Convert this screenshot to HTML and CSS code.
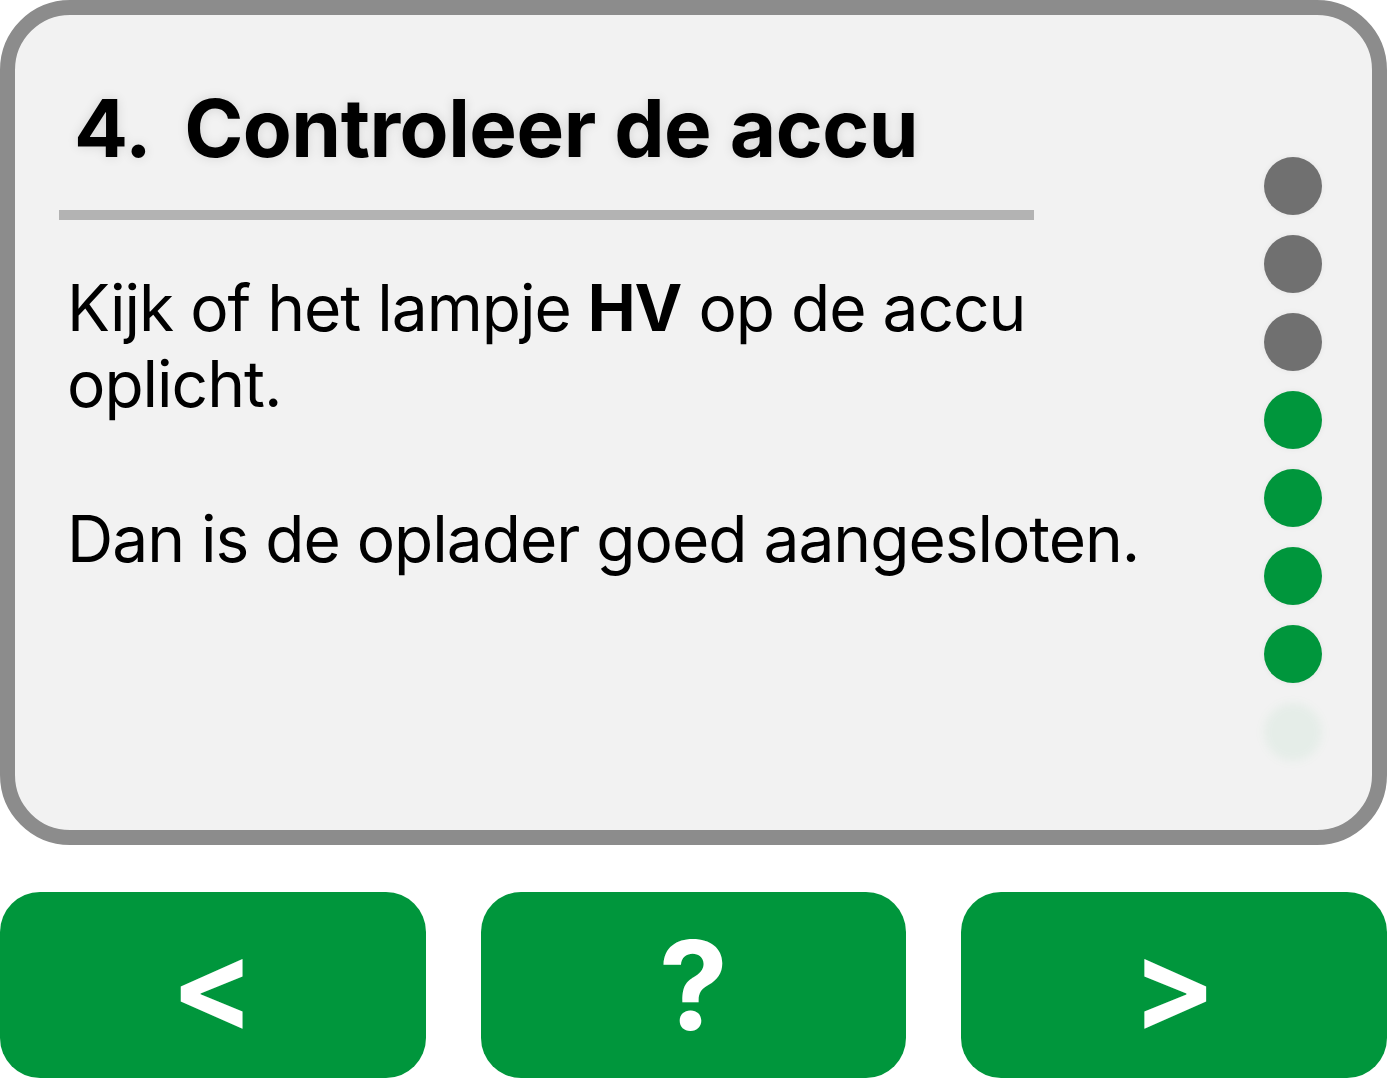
FILE: index.html
```html
<!DOCTYPE html>
<html lang="nl">
<head>
<meta charset="utf-8">
<title>Controleer de accu</title>
<link rel="stylesheet" href="styles.css">
</head>
<body>
<div class="page">
  <section class="card">
    <div class="main">
      <h1 class="title"><span class="num">4.</span>Controleer de accu</h1>
      <div class="divider"></div>
      <div class="body">
        <p>Kijk of het lampje <b>HV</b> op de accu oplicht.</p>
        <p>Dan is de oplader goed aangesloten.</p>
      </div>
    </div>
    <div class="dots">
      <span class="dot done"></span>
      <span class="dot done"></span>
      <span class="dot done"></span>
      <span class="dot todo"></span>
      <span class="dot todo"></span>
      <span class="dot todo"></span>
      <span class="dot todo"></span>
      <span class="dot ghost"></span>
    </div>
  </section>
  <nav class="buttons">
    <button class="btn">&lt;</button>
    <button class="btn">?</button>
    <button class="btn">&gt;</button>
  </nav>
</div>
</body>
</html>
```

FILE: styles.css
```css
* { box-sizing: border-box; }
html, body { margin: 0; padding: 0; background: #ffffff; }
body { font-family: Inter, "Noto Sans", "Liberation Sans", sans-serif; color: #000; }

.page {
  width: 1387px;
  height: 1078px;
  display: flex;
  flex-direction: column;
}

.card {
  height: 845px;
  border: 15px solid #8c8c8c;
  border-radius: 70px;
  background: #f2f2f2;
  display: flex;
  flex-direction: row;
  overflow: hidden;
}

.main {
  flex: 1;
  padding-left: 44px;
}

.title {
  margin: 64px 0 0 15px;
  font-size: 80px;
  font-weight: 700;
  line-height: 97px;
  letter-spacing: -0.5px;
  text-shadow: 0 0 12px rgba(0, 0, 0, 0.12);
}
.num { margin-right: 33px; }

.divider {
  width: 975px;
  height: 10px;
  background: #b3b3b3;
  margin-top: 34px;
}

.body {
  padding-left: 8px;
  margin-top: 50px;
  font-size: 64px;
  line-height: 76px;
  letter-spacing: -1px;
  width: 1110px;
}
.body p { margin: 0 0 79px 0; }
.body b { font-weight: 700; }

.dots {
  width: 137px;
  padding-top: 142px;
  padding-left: 29px;
  display: flex;
  flex-direction: column;
  gap: 20px;
}
.dot {
  display: block;
  width: 58px;
  height: 58px;
  border-radius: 50%;
  box-shadow: 0 0 6px rgba(0, 0, 0, 0.06);
}
.done { background: #707070; }
.todo { background: #00963c; }
.ghost {
  background: rgba(0, 150, 60, 0.05);
  box-shadow: none;
  filter: blur(5px);
}

.buttons {
  margin-top: 47px;
  display: flex;
  gap: 55px;
  height: 186px;
}
.btn {
  flex: 1;
  border: none;
  border-radius: 40px;
  background: #00963c;
  color: #ffffff;
  font-family: Inter, "Noto Sans", "Liberation Sans", sans-serif;
  font-size: 124px;
  font-weight: 700;
  line-height: 1;
  padding: 0;
  display: flex;
  align-items: center;
  justify-content: center;
}
```
